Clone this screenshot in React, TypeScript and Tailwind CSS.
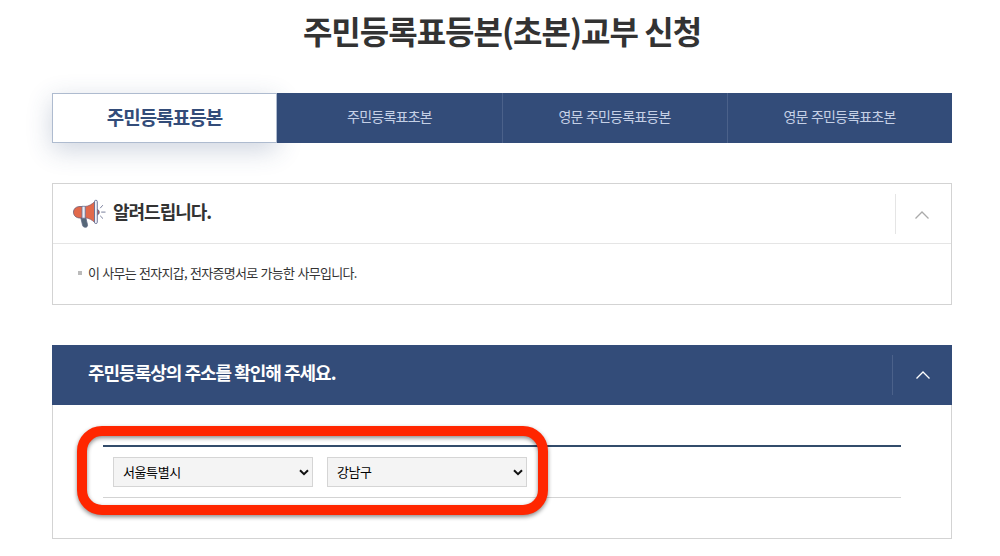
import React from 'react';

const tabs = ['주민등록표등본', '주민등록표초본', '영문 주민등록표등본', '영문 주민등록표초본'];

const MegaphoneIcon: React.FC = () => (
  <svg width="34" height="32" viewBox="0 0 34 32" fill="none" className="shrink-0">
    <path d="M8.5 18.5h5l2 8.2c.3 1.6-.7 2.6-2.2 2.6s-2.4-.7-2.8-2.2z" fill="#566778" stroke="#5f6985" strokeWidth=".8" />
    <path d="M8 8.5h2.5v11.5H8C4 20 1.5 17.5 1.5 14.2S4 8.5 8 8.5z" fill="#e2694b" stroke="#6a5a75" strokeWidth=".8" />
    <path d="M13 8.5c4-.4 7-2.2 10-5.2v21.5c-3-3-6-4.7-10-5z" fill="#e2694b" stroke="#7a5a70" strokeWidth=".7" />
    <path d="M10 8.3h3.2v11.9H10z" fill="#eceef7" stroke="#6a7294" strokeWidth=".8" />
    <path d="M25 11.5c3 .2 3 5.2 0 5.4z" fill="#c75b55" stroke="#525a80" strokeWidth=".8" />
    <rect x="22.5" y="2.3" width="2.8" height="23.2" rx="1.2" fill="#f0f1f8" stroke="#646c90" strokeWidth=".9" />
    <path d="M28.2 10.2l2.6-3M29.2 14.1h4.3M28.2 17.8l2.8 2.8" stroke="#6a7090" strokeWidth=".9" />
  </svg>
);

const FoldIcon: React.FC = () => (
  <svg width="16" height="10" viewBox="0 0 16 10" fill="none" stroke="currentColor" strokeWidth="1.3">
    <path d="M1.5 8.5 8 2l6.5 6.5" />
  </svg>
);

const SelectBox: React.FC<{ label: string; options: string[] }> = ({ label, options }) => (
  <div className="relative h-[30px] w-[200px]">
    <select
      aria-label={label}
      className="block h-full w-full appearance-none rounded-none border border-[#d5d5d5] bg-[#f4f4f4] pl-[9px] text-[13px] tracking-[-0.4px] text-black"
    >
      {options.map(option => (
        <option key={option}>{option}</option>
      ))}
    </select>
    <svg
      className="pointer-events-none absolute top-[12px] right-[4px]"
      width="10"
      height="7"
      viewBox="0 0 10 7"
      fill="none"
      stroke="#111"
      strokeWidth="2"
    >
      <path d="M1 1.2l4 4 4-4" />
    </svg>
  </div>
);

const App: React.FC = () => (
  <div className="h-[556px] overflow-hidden bg-white px-12 font-['Noto_Sans_CJK_KR',sans-serif] text-[#333]">
    <div className="mx-1 w-[900px]">
      <h1 className="h-[93px] pt-[6px] text-center text-[32px] leading-[48px] font-bold tracking-[-1px]">
        주민등록표등본(초본)교부 신청
      </h1>

      {/* Tabs */}
      <div className="grid h-[50px] grid-cols-4 bg-[#334c79]">
        {tabs.map((tab, index) => (
          <button
            key={tab}
            type="button"
            className={
              index === 0
                ? 'border border-[#aebbcf] bg-white pb-[2px] text-[19px] font-bold tracking-[-1px] text-[#334c79] shadow-[0_7px_26px_rgba(51,76,121,0.24)]'
                : index === 1
                  ? 'bg-[#334c79] pb-[3px] text-[14px] tracking-[-0.75px] text-[#c5d0e6]'
                  : 'border-l border-[#4b618a] bg-[#334c79] pr-px pb-[3px] text-[14px] tracking-[-0.8px] text-[#c5d0e6] [word-spacing:1px]'
            }
          >
            {tab}
          </button>
        ))}
      </div>

      {/* Notice */}
      <section className="mt-10 h-[122px] border border-[#d3d3d3]">
        <div className="flex h-[60px] items-center border-b border-[#e5e5e5] pl-[19px]">
          <MegaphoneIcon />
          <h2 className="ml-[7px] flex-1 pb-[4px] text-[18px] font-bold tracking-[-1px]">알려드립니다.</h2>
          <button
            type="button"
            aria-label="접기"
            className="flex h-10 w-14 items-center justify-center border-l border-[#e5e5e5] pt-[2px] pr-[3px] text-[#aaa]"
          >
            <FoldIcon />
          </button>
        </div>
        <ul className="pt-[19px] pl-[25px]">
          <li className="flex items-center text-[13px] leading-[20px] tracking-[-0.7px] [word-spacing:0.8px]">
            <span className="mr-1.5 size-1 bg-[#bbb]" />
            이 사무는 전자지갑, 전자증명서로 가능한 사무입니다.
          </li>
        </ul>
      </section>

      {/* Registered address */}
      <section className="mt-10">
        <div className="flex h-[60px] items-center bg-[#334c79] pl-9 text-white">
          <h2 className="flex-1 pb-[5px] text-[18px] font-bold tracking-[-1px]">주민등록상의 주소를 확인해 주세요.</h2>
          <button
            type="button"
            aria-label="접기"
            className="flex h-10 w-[60px] items-center justify-center border-l border-[#4b618a]"
          >
            <FoldIcon />
          </button>
        </div>
        <div className="relative h-[134px] border border-t-0 border-[#d3d3d3] px-[50px] pt-10">
          <div className="flex h-[53px] gap-3.5 border-t-2 border-b border-t-[#334c6b] border-b-[#d3d3d3] px-2.5 pt-2.5">
            <SelectBox label="시/도" options={['서울특별시']} />
            <SelectBox label="시/군/구" options={['강남구']} />
          </div>
          {/* Highlight over the address fields */}
          <div className="pointer-events-none absolute top-[21px] left-[24px] h-[89px] w-[471px] rounded-[25px] border-[10px] border-[#ff2600] drop-shadow-[0_2px_2px_rgba(0,0,0,0.45)]" />
        </div>
      </section>
    </div>
  </div>
);

export default App;
